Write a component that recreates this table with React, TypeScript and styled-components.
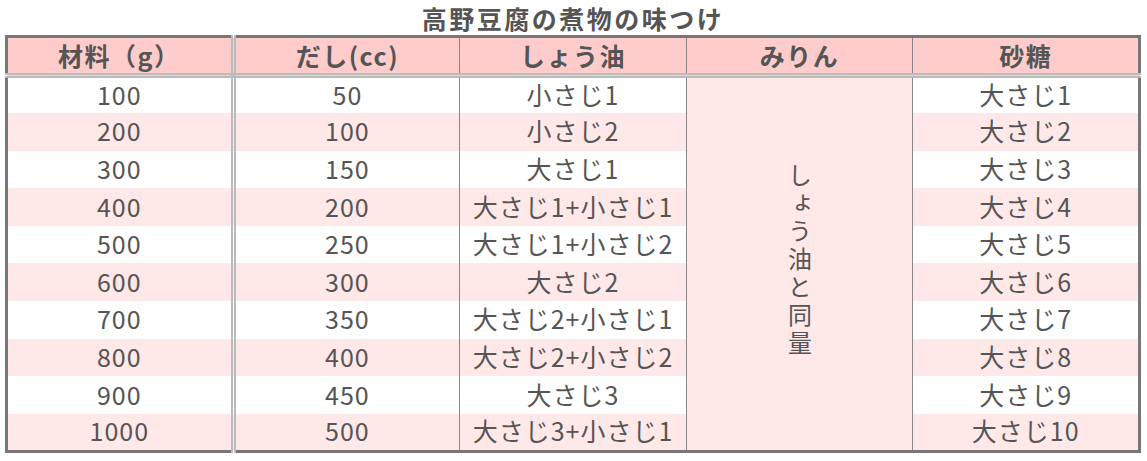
import React from "react";
import styled, { createGlobalStyle } from "styled-components";

const Global = createGlobalStyle`
  html, body { margin: 0; padding: 0; background: #fff; }
  body { font-family: "Noto Sans CJK JP", "Noto Sans", sans-serif; color: #555; }
`;

const Page = styled.div`
  padding: 0 6px 0 5px;
`;

const Title = styled.h1`
  margin: 0;
  height: 35px;
  line-height: 36px;
  text-align: center;
  font-size: 25px;
  font-weight: 700;
  letter-spacing: 2.5px;
  color: #555;
`;

const Table = styled.table`
  width: 100%;
  border-collapse: collapse;
  table-layout: fixed;
  border: 3px solid #777;
`;

const HeadCell = styled.th<{ $double?: boolean }>`
  height: 35px;
  padding: 0;
  background: #ffcccc;
  font-size: 25px;
  font-weight: 700;
  letter-spacing: 1.5px;
  line-height: 1;
  color: #555;
  text-align: center;
  border-bottom: 5px double #bbb;
  border-right: ${(p) => (p.$double ? "5px double #bbb" : "1px solid #888")};
`;

const Row = styled.tr<{ $alt: boolean }>`
  height: 37.6px;
  background: ${(p) => (p.$alt ? "#ffe8e8" : "#fff")};
`;

const Cell = styled.td<{ $double?: boolean }>`
  padding: 0 0 2px;
  text-align: center;
  font-size: 25px;
  letter-spacing: 1px;
  line-height: 1;
  color: #555;
  border-right: ${(p) => (p.$double ? "5px double #bbb" : "1px solid #888")};
`;

const MergedCell = styled.td`
  padding: 0;
  background: #ffe8e8;
  text-align: center;
  vertical-align: middle;
  border-right: 1px solid #888;
`;

const VerticalText = styled.span`
  display: inline-block;
  writing-mode: vertical-rl;
  font-size: 24px;
  letter-spacing: 4px;
  line-height: 1;
  color: #555;
`;

const rows = [
  ["100", "50", "小さじ1", "大さじ1"],
  ["200", "100", "小さじ2", "大さじ2"],
  ["300", "150", "大さじ1", "大さじ3"],
  ["400", "200", "大さじ1+小さじ1", "大さじ4"],
  ["500", "250", "大さじ1+小さじ2", "大さじ5"],
  ["600", "300", "大さじ2", "大さじ6"],
  ["700", "350", "大さじ2+小さじ1", "大さじ7"],
  ["800", "400", "大さじ2+小さじ2", "大さじ8"],
  ["900", "450", "大さじ3", "大さじ9"],
  ["1000", "500", "大さじ3+小さじ1", "大さじ10"],
];

export default function App() {
  return (
    <Page>
      <Global />
      <Title>高野豆腐の煮物の味つけ</Title>
      <Table>
        <colgroup>
          <col style={{ width: "20%" }} />
          <col style={{ width: "20%" }} />
          <col style={{ width: "20%" }} />
          <col style={{ width: "20%" }} />
          <col style={{ width: "20%" }} />
        </colgroup>
        <thead>
          <tr>
            <HeadCell $double>材料（g）</HeadCell>
            <HeadCell>だし(cc)</HeadCell>
            <HeadCell>しょう油</HeadCell>
            <HeadCell>みりん</HeadCell>
            <HeadCell>砂糖</HeadCell>
          </tr>
        </thead>
        <tbody>
          {rows.map((r, i) => (
            <Row key={i} $alt={i % 2 === 1}>
              <Cell $double>{r[0]}</Cell>
              <Cell>{r[1]}</Cell>
              <Cell>{r[2]}</Cell>
              {i === 0 && (
                <MergedCell rowSpan={10}>
                  <VerticalText>しょう油と同量</VerticalText>
                </MergedCell>
              )}
              <Cell>{r[3]}</Cell>
            </Row>
          ))}
        </tbody>
      </Table>
    </Page>
  );
}
